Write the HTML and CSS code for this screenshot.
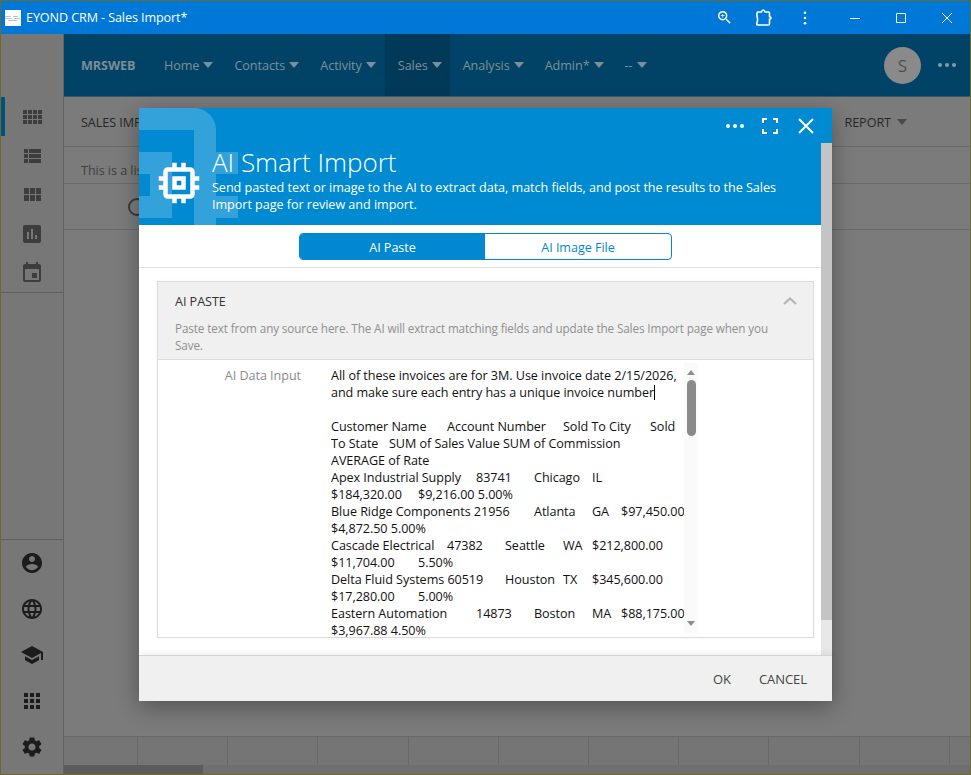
FILE: index.html
```html
<!DOCTYPE html>
<html lang="en">
<head>
<meta charset="utf-8">
<title>EYOND CRM - Sales Import*</title>
<link rel="stylesheet" href="styles.css">
</head>
<body>
<div class="window">
  <header class="titlebar">
    <svg class="app-logo" viewBox="0 0 16 16"><rect width="16" height="16" fill="#fff"/><path fill="#b9c4cf" d="M0 6h6v1H0zM0 8h7v1H0zM8 6h5v1H8zM9 8h6v1H9zM3 10h9v1H3z"/></svg>
    <div class="app-title">EYOND CRM - Sales Import*</div>
    <div class="title-tools">
      <svg class="tool zoomi" viewBox="3 3 18 18"><path fill="#fff" d="M15.500 14h-.79l-.28-.27A6.470 6.470 0 0 0 16 9.500 6.500 6.500 0 1 0 9.500 16c1.610 0 3.090-.59 4.230-1.570l.27.28v.79l5 4.990L20.490 19l-4.990-5zm-6 0C7.010 14 5 11.990 5 9.500S7.010 5 9.500 5 14 7.010 14 9.500 11.990 14 9.500 14zM12 10h-2v2H9v-2H7V9h2V7h1v2h2v1z"/></svg>
      <svg class="tool puzzle" viewBox="0 0 18 18"><path fill="none" stroke="#fff" stroke-width="1.600" stroke-linejoin="round" d="M2.500 3H6.500c.2-1.300 1-1.900 1.800-1.900s1.500.6 1.700 1.900h3.500a1 1 0 0 1 1 1v3.700c1 .1 1.500.5 1.500 1.200s-.5 1.100-1.500 1.200V15a1 1 0 0 1-1 1H2.500c-.6 0-.9-.4-.8-1l.8-3.500c.2-1.200.1-1.800-.2-2.800C1.900 7 1.600 4.500 2.500 3z"/></svg>
      <svg class="tool kebab" viewBox="0 0 4 16"><circle cx="2" cy="2" r="1.500" fill="#fff"/><circle cx="2" cy="8" r="1.500" fill="#fff"/><circle cx="2" cy="14" r="1.500" fill="#fff"/></svg>
    </div>
    <div class="win-controls">
      <svg class="win-btn" viewBox="0 0 46 20"><path stroke="#fff" d="M18 10.500h10"/></svg>
      <svg class="win-btn" viewBox="0 0 46 20"><path fill="none" stroke="#fff" d="M18.500 5.500h9v9h-9z"/></svg>
      <svg class="win-btn" viewBox="0 0 46 20"><path fill="none" stroke="#fff" d="M18 5l10 10M28 5L18 15"/></svg>
    </div>
  </header>

  <div class="app">
    <aside class="sidebar">
      <div class="side-top">
        <div class="side-item side-active"><svg class="side-icon dim" viewBox="0 0 24 24"><path d="M3 9h4V5H3v4zm0 5h4v-4H3v4zm5 0h4v-4H8v4zm5 0h4v-4h-4v4zM8 9h4V5H8v4zm5-4v4h4V5h-4zm5 9h4v-4h-4v4zM3 19h4v-4H3v4zm5 0h4v-4H8v4zm5 0h4v-4h-4v4zm5 0h4v-4h-4v4zm0-14v4h4V5h-4z"/></svg></div>
        <div class="side-item"><svg class="side-icon dim" viewBox="0 0 24 24"><path d="M4 14h4v-4H4v4zm0 5h4v-4H4v4zM4 9h4V5H4v4zm5 5h12v-4H9v4zm0 5h12v-4H9v4zM9 5v4h12V5H9z"/></svg></div>
        <div class="side-item"><svg class="side-icon dim" viewBox="0 0 24 24"><path d="M4 11h5V5H4v6zm0 7h5v-6H4v6zm6 0h5v-6h-5v6zm6 0h5v-6h-5v6zm-6-7h5V5h-5v6zm6-6v6h5V5h-5z"/></svg></div>
        <div class="side-item"><svg class="side-icon dim" viewBox="0 0 24 24"><path d="M19 3H5c-1.100 0-2 .9-2 2v14c0 1.100.9 2 2 2h14c1.100 0 2-.9 2-2V5c0-1.100-.9-2-2-2zM9 17H7v-7h2v7zm4 0h-2V7h2v10zm4 0h-2v-4h2v4z"/></svg></div>
        <div class="side-item"><svg class="side-icon dim" viewBox="0 0 24 24"><path d="M17 12h-5v5h5v-5zM16 1v2H8V1H6v2H5c-1.110 0-1.990.9-1.990 2L3 19c0 1.100.89 2 2 2h14c1.100 0 2-.9 2-2V5c0-1.100-.9-2-2-2h-1V1h-2zm3 18H5V8h14v11z"/></svg></div>
      </div>
      <div class="side-bottom">
        <div class="side-item-lg"><svg class="side-icon" viewBox="0 0 24 24"><path d="M12 2C6.480 2 2 6.480 2 12s4.480 10 10 10 10-4.480 10-10S17.520 2 12 2zm0 3c1.660 0 3 1.340 3 3s-1.340 3-3 3-3-1.340-3-3 1.340-3 3-3zm0 14.200c-2.500 0-4.710-1.280-6-3.220.03-1.990 4-3.080 6-3.080 1.990 0 5.970 1.090 6 3.080-1.290 1.940-3.500 3.220-6 3.220z"/></svg></div>
        <div class="side-item-lg"><svg class="side-icon" viewBox="0 0 24 24"><path d="M11.990 2C6.470 2 2 6.480 2 12s4.470 10 9.990 10C17.520 22 22 17.520 22 12S17.520 2 11.990 2zm6.930 6h-2.950c-.32-1.250-.78-2.450-1.380-3.560 1.840.63 3.370 1.910 4.330 3.560zM12 4.040c.83 1.200 1.480 2.530 1.910 3.960h-3.820c.43-1.430 1.080-2.760 1.910-3.960zM4.260 14C4.100 13.360 4 12.690 4 12s.1-1.360.26-2h3.380c-.08.66-.14 1.320-.14 2 0 .68.06 1.340.14 2H4.260zm.82 2h2.950c.32 1.250.78 2.450 1.380 3.560-1.840-.63-3.370-1.900-4.330-3.560zm2.950-8H5.080c.96-1.660 2.490-2.930 4.330-3.560C8.810 5.550 8.350 6.750 8.030 8zM12 19.960c-.83-1.200-1.480-2.530-1.910-3.960h3.820c-.43 1.430-1.080 2.760-1.910 3.960zM14.340 14H9.660c-.09-.66-.16-1.320-.16-2 0-.68.07-1.350.16-2h4.680c.09.65.16 1.320.16 2 0 .68-.07 1.340-.16 2zm.25 5.560c.6-1.110 1.060-2.310 1.380-3.560h2.950c-.96 1.650-2.490 2.930-4.330 3.560zM16.360 14c.08-.66.14-1.320.14-2 0-.68-.06-1.340-.14-2h3.380c.16.64.26 1.310.26 2s-.1 1.360-.26 2h-3.380z"/></svg></div>
        <div class="side-item-lg"><svg class="side-icon" viewBox="0 0 24 24"><path d="M5 13.180v4L12 21l7-3.820v-4L12 17l-7-3.820zM12 3L1 9l11 6 9-4.910V17h2V9L12 3z"/></svg></div>
        <div class="side-item-lg"><svg class="side-icon" viewBox="0 0 24 24"><path d="M4 8h4V4H4v4zm6 12h4v-4h-4v4zm-6 0h4v-4H4v4zm0-6h4v-4H4v4zm6 0h4v-4h-4v4zm6-10v4h4V4h-4zm-6 4h4V4h-4v4zm6 6h4v-4h-4v4zm0 6h4v-4h-4v4z"/></svg></div>
        <div class="side-item-lg"><svg class="side-icon" viewBox="0 0 24 24"><path d="M19.140 12.940c.04-.3.06-.61.06-.94 0-.32-.02-.64-.07-.94l2.030-1.580c.18-.14.23-.41.12-.61l-1.920-3.320c-.12-.22-.37-.29-.59-.22l-2.390.96c-.5-.38-1.030-.7-1.620-.94l-.36-2.540c-.04-.24-.24-.41-.48-.41h-3.840c-.24 0-.43.17-.47.41l-.36 2.540c-.59.24-1.130.57-1.620.94l-2.390-.96c-.22-.08-.47 0-.59.22L2.740 8.870c-.12.21-.08.47.12.61l2.030 1.580c-.05.3-.09.63-.09.94s.02.64.07.94l-2.030 1.580c-.18.14-.23.41-.12.61l1.920 3.320c.12.22.37.29.59.22l2.390-.96c.5.38 1.030.7 1.620.94l.36 2.540c.05.24.24.41.48.41h3.840c.24 0 .44-.17.47-.41l.36-2.540c.59-.24 1.130-.56 1.620-.94l2.390.96c.22.08.47 0 .59-.22l1.920-3.320c.12-.22.07-.47-.12-.61l-2.010-1.580zM12 15.600c-1.980 0-3.600-1.620-3.600-3.600s1.620-3.600 3.600-3.600 3.600 1.620 3.600 3.600-1.620 3.600-3.600 3.600z"/></svg></div>
      </div>
    </aside>

    <main class="main">
      <nav class="nav">
        <div class="brand">MRSWEB</div>
        <div class="nav-item">Home<i class="caret"></i></div>
        <div class="nav-item">Contacts<i class="caret"></i></div>
        <div class="nav-item">Activity<i class="caret"></i></div>
        <div class="nav-item nav-active">Sales<i class="caret"></i></div>
        <div class="nav-item">Analysis<i class="caret"></i></div>
        <div class="nav-item">Admin*<i class="caret"></i></div>
        <div class="nav-item">--<i class="caret"></i></div>
        <div class="nav-right">
          <div class="avatar">S</div>
          <svg class="nav-dots" viewBox="0 0 18 4"><circle cx="2" cy="2" r="2"/><circle cx="9" cy="2" r="2"/><circle cx="16" cy="2" r="2"/></svg>
        </div>
      </nav>
      <div class="subbar">
        <div class="subtitle">SALES IMPORT</div>
        <div class="sub-report">REPORT<i class="caret caret-dark"></i></div>
      </div>
      <div class="inforow">This is a list of sales records to import.</div>
      <div class="actionrow"><span class="ring"></span></div>
      <div class="grid-fill"></div>
      <div class="grid-foot">
        <span class="cell"></span><span class="cell"></span><span class="cell"></span><span class="cell"></span><span class="cell"></span><span class="cell"></span><span class="cell"></span><span class="cell"></span><span class="cell"></span><span class="cell"></span>
      </div>
      <div class="hscroll"><div class="hthumb"></div></div>
    </main>
  </div>

  <section class="dialog">
    <div class="deco"><svg class="deco-chip" viewBox="0 0 24 24"><path d="M15 9H9v6h6V9zm-2 4h-2v-2h2v2zm8-2V9h-2V7c0-1.100-.9-2-2-2h-2V3h-2v2h-2V3H9v2H7c-1.100 0-2 .9-2 2v2H3v2h2v2H3v2h2v2c0 1.100.9 2 2 2h2v2h2v-2h2v2h2v-2h2c1.100 0 2-.9 2-2v-2h2v-2h-2v-2h2zm-4 6H7V7h10v10z"/></svg></div>
    <div class="dlg-bar">
      <svg class="bar-dots" viewBox="0 0 18 4"><circle cx="2" cy="2" r="2"/><circle cx="9" cy="2" r="2"/><circle cx="16" cy="2" r="2"/></svg>
      <svg class="bar-full" viewBox="0 0 16 16"><path fill="none" stroke="#fff" stroke-width="2" d="M1 5V1h4M11 1h4v4M15 11v4h-4M5 15H1v-4"/></svg>
      <svg class="bar-close" viewBox="0 0 16 16"><path fill="none" stroke="#fff" stroke-width="2" d="M1 1l14 14M15 1L1 15"/></svg>
    </div>
    <div class="dlg-scrollarea">
      <div class="dlg-content">
        <div class="dlg-head">
          <svg class="chip" viewBox="0 0 24 24"><path d="M15 9H9v6h6V9zm-2 4h-2v-2h2v2zm8-2V9h-2V7c0-1.100-.9-2-2-2h-2V3h-2v2h-2V3H9v2H7c-1.100 0-2 .9-2 2v2H3v2h2v2H3v2h2v2c0 1.100.9 2 2 2h2v2h2v-2h2v2h2v-2h2c1.100 0 2-.9 2-2v-2h2v-2h-2v-2h2zm-4 6H7V7h10v10z"/></svg>
          <div class="head-text">
            <h1 class="dlg-title">AI Smart Import</h1>
            <p class="dlg-desc">Send pasted text or image to the AI to extract data, match fields, and post the results to the Sales<br>Import page for review and import.</p>
          </div>
        </div>
        <div class="tabs-row">
          <div class="tabs">
            <div class="tab tab-on">AI Paste</div>
            <div class="tab">AI Image File</div>
          </div>
        </div>
        <div class="card">
          <div class="card-head">
            <div class="card-title-row">
              <span class="card-title">AI PASTE</span>
              <svg class="chev" viewBox="0 0 14 8"><path fill="none" stroke="#b5b5b5" stroke-width="2.200" d="M1 7l6-5.500L13 7"/></svg>
            </div>
            <p class="card-desc">Paste text from any source here. The AI will extract matching fields and update the Sales Import page when you<br>Save.</p>
          </div>
          <div class="field">
            <label class="field-label">AI Data Input</label>
            <div class="field-box">
<pre class="field-text">All of these invoices are for 3M. Use invoice date 2/15/2026,
and make sure each entry has a unique invoice number<span class="cursor"></span>

Customer Name	Account Number	Sold To City	Sold
To State	SUM of Sales Value SUM of Commission
AVERAGE of Rate
Apex Industrial Supply	83741	Chicago	IL
$184,320.00	$9,216.00 5.00%
Blue Ridge Components 21956	Atlanta	GA	$97,450.00
$4,872.50 5.00%
Cascade Electrical	47382	Seattle	WA	$212,800.00
$11,704.00	5.50%
Delta Fluid Systems 60519	Houston	TX	$345,600.00
$17,280.00	5.00%
Eastern Automation	14873	Boston	MA	$88,175.00
$3,967.88 4.50%</pre>
              <div class="vbar">
                <i class="arrow-up"></i>
                <div class="vthumb"></div>
                <i class="arrow-down"></i>
              </div>
            </div>
          </div>
        </div>
      </div>
      <div class="dlg-scrollbar"><div class="dlg-thumb"></div></div>
    </div>
    <footer class="dlg-foot">
      <span class="foot-btn">OK</span>
      <span class="foot-btn">CANCEL</span>
    </footer>
  </section>
</div>
</body>
</html>
```

FILE: styles.css
```css
* { box-sizing: border-box; }
html, body { margin: 0; padding: 0; }
body {
  width: 971px;
  height: 775px;
  overflow: hidden;
  font-family: "Open Sans", "Noto Sans", sans-serif;
  font-size: 12.6px;
  letter-spacing: -0.05px;
}
.window {
  position: relative;
  width: 971px;
  height: 775px;
  display: flex;
  flex-direction: column;
  border: 1px solid #6d6a2e;
  background: #7b7b7b;
  overflow: hidden;
}
.titlebar {
  flex: 0 0 33px;
  background: #0078d7;
  color: #fff;
  display: flex;
  align-items: center;
  padding-left: 4px;
}
.app-logo { width: 16px; height: 16px; display: block; }
.app-title { margin-left: 5px; font-size: 12.6px; letter-spacing: -0.1px; }
.title-tools { margin-left: auto; display: flex; align-items: center; }
.tool { display: block; }
.zoomi { width: 13px; height: 13px; }
.puzzle { width: 18px; height: 18px; margin-left: 24px; }
.kebab { width: 4px; height: 14px; margin-left: 30px; }
.win-controls { display: flex; margin-left: 25px; }
.win-btn { width: 46px; height: 20px; display: block; }

.app { flex: 1; display: flex; min-height: 0; }
.sidebar {
  flex: 0 0 63px;
  background: #777;
  border-right: 1px solid #636363;
  display: flex;
  flex-direction: column;
  justify-content: space-between;
}
.side-top { padding-top: 63px; border-bottom: 1px solid #5f5f5f; height: 259px; }
.side-item { height: 39px; display: flex; align-items: center; justify-content: center; }
.side-active { box-shadow: inset 4px 0 0 #00527c; }
.side-icon { width: 24px; height: 24px; fill: #1c1c1c; display: block; margin-left: 0; }
.dim { fill: #3d3d3d; }
.side-bottom { border-top: 1px solid #5f5f5f; height: 235px; padding-top: 0; }
.side-item-lg { height: 46px; display: flex; align-items: center; justify-content: center; }

.main { flex: 1; display: flex; flex-direction: column; min-width: 0; }
.nav {
  flex: 0 0 63px;
  background: #004366;
  color: #7f8f99;
  display: flex;
  align-items: stretch;
  padding-left: 17px;
  border-bottom: 1px solid #3f5866;
}
.brand { font-weight: 700; display: flex; align-items: center; width: 70px; color: #7d8c95; }
.nav-item { display: flex; align-items: center; padding: 0 8px 0 13px; }
.nav-active { background: #003a58; margin-left: 1px; }
.caret {
  display: inline-block;
  margin-left: 4px;
  width: 0;
  height: 0;
  border-left: 5.500px solid transparent;
  border-right: 5.500px solid transparent;
  border-top: 6px solid #7f8f99;
}
.caret-dark { border-top-color: #4a4a4a; margin-left: 6px; }
.sub-report { display: flex; align-items: center; }
.nav-right { margin-left: auto; display: flex; align-items: center; padding-right: 14px; }
.avatar {
  width: 37px;
  height: 37px;
  border-radius: 50%;
  background: #8a8a8a;
  color: #505050;
  font-size: 17px;
  display: flex;
  align-items: center;
  justify-content: center;
}
.nav-dots { width: 18px; height: 4px; margin-left: 17px; fill: #8a9aa3; }

.subbar {
  flex: 0 0 50px;
  border-bottom: 1px solid #6a6a6a;
  display: flex;
  align-items: center;
  justify-content: space-between;
  padding: 1px 63px 0 17px;
  color: #272727;
}
.inforow {
  flex: 0 0 37px;
  border-bottom: 1px solid #6a6a6a;
  display: flex;
  align-items: center;
  padding: 10px 0 0 17px;
  color: #3f3f3f;
}
.actionrow {
  flex: 0 0 46px;
  border-bottom: 1px solid #6a6a6a;
  display: flex;
  align-items: center;
  padding-left: 64px;
}
.ring { width: 18px; height: 18px; border: 2px solid #3a3a3a; border-radius: 50%; }
.grid-fill { flex: 1; }
.grid-foot {
  flex: 0 0 29px;
  border-top: 1px solid #686868;
  background: #757575;
  display: flex;
  padding-left: 73px;
}
.cell { flex: 0 0 90.200px; border-left: 1px solid #686868; height: 100%; }
.hscroll { flex: 0 0 9px; background: #6f6f6f; }
.hthumb { width: 139px; height: 100%; background: #5c5c5c; }

.dialog {
  position: absolute;
  left: 138px;
  top: 107px;
  width: 693px;
  height: 593px;
  background: #fff;
  display: flex;
  flex-direction: column;
  box-shadow: 0 6px 22px rgba(0, 0, 0, 0.32);
}
.deco {
  position: absolute;
  left: 0;
  top: 0;
  z-index: 1;
  width: 130px;
  height: 117px;
  overflow: hidden;
}
.deco-chip {
  position: absolute;
  left: -132px;
  top: -55px;
  width: 264px;
  height: 264px;
  fill: rgba(255, 255, 255, 0.2);
}
.dlg-bar {
  flex: 0 0 35px;
  background: #008ad1;
  display: flex;
  align-items: center;
  padding: 0 17px 0 587px;
}
.bar-dots { width: 18px; height: 4px; fill: #fff; }
.bar-full { width: 16px; height: 16px; margin-left: 18px; }
.bar-close { width: 16px; height: 16px; margin-left: 20px; }
.dlg-scrollarea { flex: 1; display: flex; min-height: 0; }
.dlg-content { flex: 1; min-width: 0; display: flex; flex-direction: column; overflow: hidden; }
.dlg-head {
  flex: 0 0 82px;
  background: #008ad1;
  display: flex;
  color: #fff;
  padding-left: 13px;
}
.chip { position: relative; z-index: 2; width: 54px; height: 54px; fill: #fff; margin-top: 13px; flex: none; }
.head-text { margin-left: 6px; position: relative; z-index: 2; }
.dlg-title { margin: 3px 0 0; font-size: 26px; font-weight: 300; line-height: 32px; letter-spacing: 0; }
.dlg-desc { margin: 1px 0 0; line-height: 17px; white-space: nowrap; letter-spacing: -0.04px; }
.tabs-row {
  flex: 0 0 43px;
  border-bottom: 1px solid #e2e2e2;
  display: flex;
  justify-content: center;
  padding-top: 8px;
}
.tabs {
  width: 373px;
  height: 27px;
  margin-left: 11px;
  border: 1px solid #0288d1;
  border-radius: 4px;
  display: flex;
  overflow: hidden;
  color: #0288d1;
}
.tab { flex: 1; display: flex; align-items: center; justify-content: center; padding-top: 1px; }
.tab-on { flex: 0 0 185px; background: #0288d1; color: #fff; }
.card {
  margin: 13px 7px 0 18px;
  border: 1px solid #dcdcdc;
  height: 357px;
  overflow: hidden;
  box-shadow: 0 0 3px rgba(0, 0, 0, 0.05);
}
.card-head {
  height: 78px;
  background: #f0f0f0;
  border-bottom: 1px solid #dcdcdc;
  padding: 9px 17px 0;
}
.card-title-row { display: flex; justify-content: space-between; align-items: center; height: 20px; }
.card-title { color: #333; }
.chev { width: 14px; height: 8px; margin-right: -1px; }
.card-desc { margin: 9px 0 0; color: #8f8f8f; line-height: 17px; white-space: nowrap; font-size: 11.700px; letter-spacing: -0.11px; }
.field { display: flex; height: 278px; padding-top: 7px; }
.field-label {
  flex: 0 0 144px;
  padding-right: 1px;
  text-align: right;
  color: #8a8a8a;
  line-height: 17px;
}
.field-box { margin-left: 29px; display: flex; height: 271px; }
.field-text {
  margin: 0;
  width: 353px;
  height: 271px;
  overflow: hidden;
  font: inherit;
  line-height: 17px;
  tab-size: 29px;
  color: #111;
  white-space: pre;
}
.cursor { display: inline-block; width: 1px; height: 15px; background: #000; vertical-align: -3px; }
.vbar {
  width: 14px;
  height: 270px;
  margin-top: -4px;
  background: #fafafa;
  display: flex;
  flex-direction: column;
  align-items: center;
  padding-top: 7px;
}
.arrow-up, .arrow-down {
  width: 0;
  height: 0;
  border-left: 4.500px solid transparent;
  border-right: 4.500px solid transparent;
}
.arrow-up { border-bottom: 5px solid #8d8d8d; }
.arrow-down { border-top: 5px solid #8d8d8d; margin-top: auto; margin-bottom: 7px; }
.vthumb { width: 9px; height: 56px; margin-top: 5px; border-radius: 4.500px; background: #8a8a8a; }
.dlg-scrollbar { flex: 0 0 11px; background: #e8e8e8; }
.dlg-thumb { height: 477px; background: #c4c4c4; }
.dlg-foot {
  flex: 0 0 46px;
  background: #f0f0f0;
  border-top: 1px solid #d4d4d4;
  box-shadow: 0 -3px 6px rgba(0, 0, 0, 0.05);
  position: relative;
  display: flex;
  align-items: center;
  justify-content: flex-end;
  padding-right: 25px;
  gap: 28px;
  color: #444;
  font-weight: 500;
  font-size: 13px;
}
```
